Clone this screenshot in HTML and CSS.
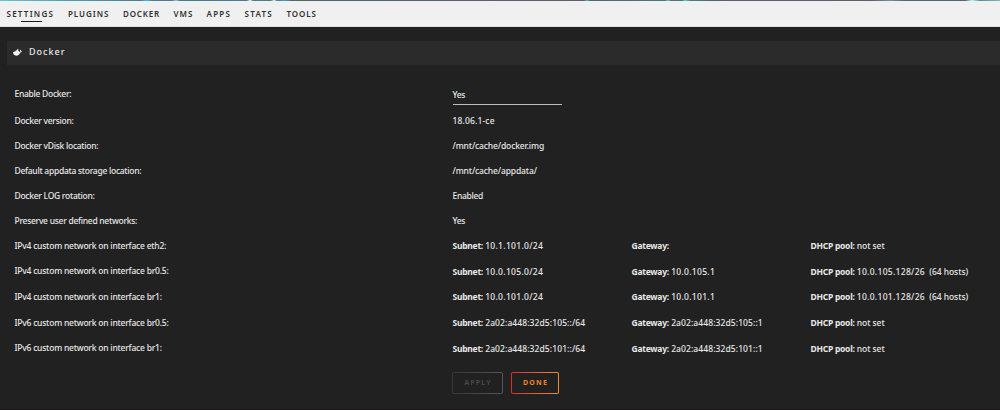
FILE: index.html
```html
<!DOCTYPE html>
<html lang="en">
<head>
<meta charset="utf-8">
<title>Docker</title>
<link rel="stylesheet" href="styles.css">
</head>
<body>
<div class="banner"></div>
<nav class="menu">
  <a class="active">SETTINGS</a><a class="plugins">PLUGINS</a><a class="docker">DOCKER</a><a class="vms">VMS</a><a class="apps">APPS</a><a class="stats">STATS</a><a class="tools">TOOLS</a>
</nav>
<main>
  <header class="title">
    <svg class="whale" viewBox="0 0 20 14"><path fill="#f2f2f2" d="M0 6h3V4h3V2h3V0h3v4h2v2c1 0 2 0 2-1-1-2 0-3 1-4 1 1 1 2 1 3 1 0 2 0 2 1-1 2-3 2-4 2-1 4-4 7-9 7-4 0-7-3-7-8z"/></svg>
    <h1>Docker</h1>
  </header>
  <dl class="settings">
    <div class="row select-row"><dt>Enable Docker:</dt><dd><span class="select">Yes</span></dd></div>
    <div class="row"><dt>Docker version:</dt><dd class="version">18.06.1-ce</dd></div>
    <div class="row"><dt>Docker vDisk location:</dt><dd>/mnt/cache/docker.img</dd></div>
    <div class="row"><dt>Default appdata storage location:</dt><dd>/mnt/cache/appdata/</dd></div>
    <div class="row"><dt>Docker LOG rotation:</dt><dd class="tight">Enabled</dd></div>
    <div class="row"><dt>Preserve user defined networks:</dt><dd class="tight">Yes</dd></div>
    <div class="row net"><dt>IPv4 custom network on interface eth2:</dt><dd><b>Subnet:</b> <span class="ip">10.1.101.0/24</span></dd><dd><b>Gateway:</b></dd><dd><b>DHCP pool:</b> not set</dd></div>
    <div class="row net"><dt>IPv4 custom network on interface br0.5:</dt><dd><b>Subnet:</b> <span class="ip">10.0.105.0/24</span></dd><dd><b>Gateway:</b> <span class="ip">10.0.105.1</span></dd><dd><b>DHCP pool:</b> <span class="ip">10.0.105.128/26</span>&nbsp; (64 hosts)</dd></div>
    <div class="row net"><dt>IPv4 custom network on interface br1:</dt><dd><b>Subnet:</b> <span class="ip">10.0.101.0/24</span></dd><dd><b>Gateway:</b> <span class="ip">10.0.101.1</span></dd><dd><b>DHCP pool:</b> <span class="ip">10.0.101.128/26</span>&nbsp; (64 hosts)</dd></div>
    <div class="row net"><dt>IPv6 custom network on interface br0.5:</dt><dd><b>Subnet:</b> <span class="ip6">2a02:a448:32d5:105::/64</span></dd><dd><b>Gateway:</b> <span class="ip6">2a02:a448:32d5:105::1</span></dd><dd><b>DHCP pool:</b> not set</dd></div>
    <div class="row net"><dt>IPv6 custom network on interface br1:</dt><dd><b>Subnet:</b> <span class="ip6">2a02:a448:32d5:101::/64</span></dd><dd><b>Gateway:</b> <span class="ip6">2a02:a448:32d5:101::1</span></dd><dd><b>DHCP pool:</b> not set</dd></div>
  </dl>
  <div class="actions"><button class="btn apply" disabled>APPLY</button><button class="btn done">DONE</button></div>
</main>
</body>
</html>
```

FILE: styles.css
```css
* { box-sizing: border-box; }
body {
  margin: 0;
  height: 410px;
  overflow: hidden;
  display: flex;
  flex-direction: column;
  background: #212121;
  border-bottom: 1px solid #1b1518;
  color: #e8e8e8;
  font: 500 8.5px/12px "Noto Sans", sans-serif;
}
.banner {
  height: 1px;
  flex: none;
  background: linear-gradient(90deg, #62c6cf 0, #4aa5b3 6%, #40818f 14%, #35bfe9 14.7%, #487f91 15.2%, #4b7e8c 17.2%, #9dc4cf 17.6%, #3d7f91 18%, #4b7e8c 24.7%, #f1ffff 25%, #4a7e8c 25.3%, #4b7e8c 27.1%, #e4f5f5 27.4%, #4b7e8c 27.7%, #3ba5bd 28.5%, #53646f 29.2%, #59606c 58.4%, #36c9cb 58.7%, #566371 59%, #4b7485 66.5%, #58d1d4 66.8%, #4b7485 67.1%, #4b7485 68.2%, #58d1d4 68.5%, #487e8f 69%, #566170 71.5%, #59606c 87%, #78909b 89%, #536473 90.5%, #536473 96.5%, #b4fbff 97.2%, #588b9a 98%, #7fb5c0 100%);
}
.menu {
  height: 26px;
  flex: none;
  display: flex;
  background: #f0f0f0;
  border-bottom: 1px solid #dedede;
  padding-left: 6.5px;
  color: #303030;
  font-size: 8px;
  font-weight: 600;
  line-height: 25px;
  letter-spacing: 1.25px;
}
.menu a { position: relative; }
.active { width: 61.5px; }
.plugins { width: 55px; letter-spacing: 0.95px; }
.docker { width: 50.5px; letter-spacing: 0.8px; }
.vms { width: 33px; letter-spacing: 1px; }
.apps { width: 38px; }
.stats { width: 42px; }
.tools { letter-spacing: 0.9px; }
.active::after {
  content: "";
  position: absolute;
  left: 14px;
  top: 20px;
  width: 21px;
  height: 1.3px;
  background: #1c1b1b;
}
main { padding-top: 14px; }
.title {
  display: flex;
  align-items: center;
  height: 24px;
  margin-left: 7px;
  padding: 0 0 1px 6px;
  background: #2b2b2b;
}
.whale { width: 9px; height: 7px; margin-right: 7px; }
h1 { margin: -1px 0 0; font-size: 9px; font-weight: 500; letter-spacing: 1px; }
.settings { margin: 15px 0 0 14.5px; }
.row {
  display: grid;
  grid-template-columns: 438px 179px 179px 1fr;
  height: 25px;
  align-items: center;
  white-space: nowrap;
}
.row dt { letter-spacing: -0.28px; }
.row dd { margin: 0; letter-spacing: -0.13px; }
.row .tight { letter-spacing: -0.3px; }
.select-row { height: 28px; }
.select-row dt { margin-bottom: 1px; }
.select {
  display: block;
  width: 109px;
  height: 19px;
  margin-top: 3px;
  padding-top: 3px;
  border-bottom: 1px solid #bdbdbd;
  letter-spacing: -0.3px;
}
.net { height: 25.6px; }
.net dt { letter-spacing: -0.22px; }
.net dd { padding-top: 1px; letter-spacing: -0.05px; }
.row .version { letter-spacing: 0.15px; }
.ip { letter-spacing: 0.3px; }
.ip6 { letter-spacing: 0.09px; }
b { font-weight: 700; letter-spacing: -0.25px; }
.actions { display: flex; gap: 8px; margin: 11px 0 0 452px; }
.btn {
  height: 22px;
  padding: 0 0 0 1px;
  border: 1px solid transparent;
  border-radius: 2px;
  font: 700 7px/18px "Noto Sans", sans-serif;
  letter-spacing: 1.2px;
}
.apply {
  width: 51px;
  color: #474747;
  background: linear-gradient(#212121, #212121) padding-box, linear-gradient(90deg, #373737, #575757) border-box;
}
.done {
  width: 48px;
  color: #f0812c;
  background: linear-gradient(#212121, #212121) padding-box, linear-gradient(90deg, #dc2c2d, #f38b30) border-box;
}
```
